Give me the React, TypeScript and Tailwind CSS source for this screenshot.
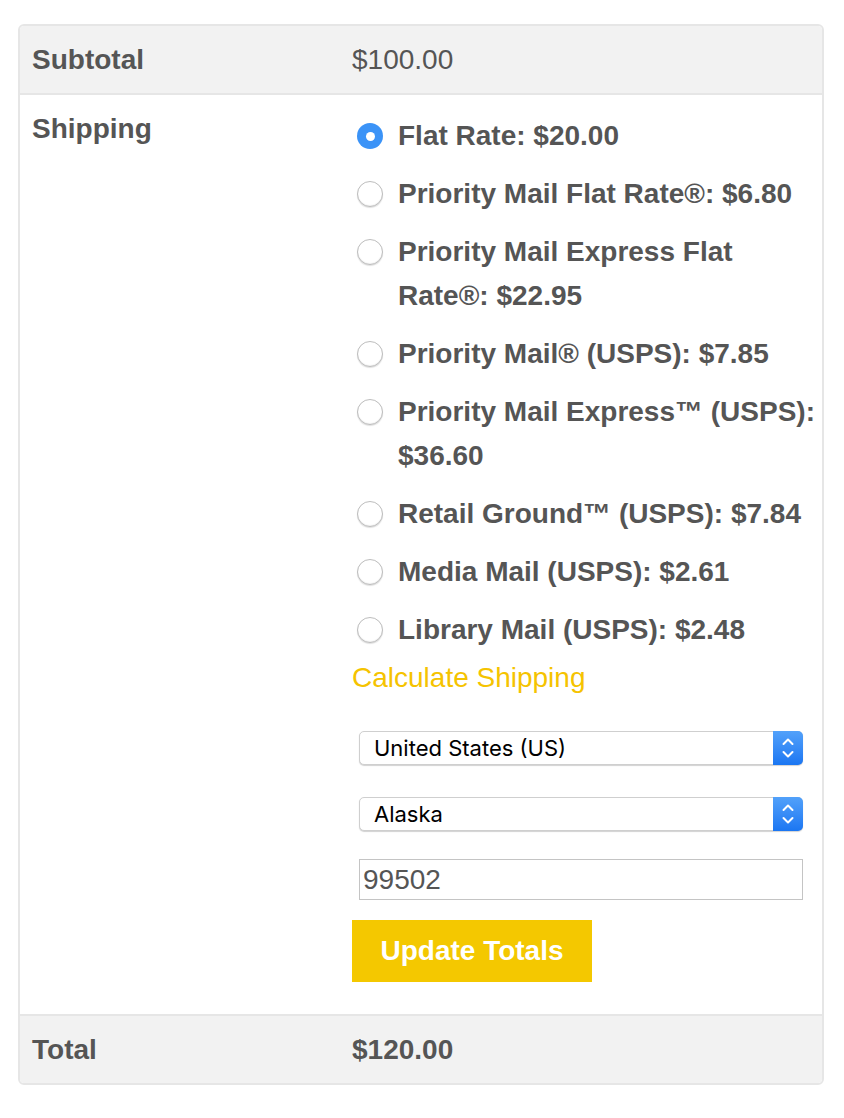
import React, { useState } from "react";

const rates = [
  { id: "flat", label: "Flat Rate: $20.00" },
  { id: "pmfr", label: "Priority Mail Flat Rate®: $6.80" },
  { id: "pmefr", label: "Priority Mail Express Flat Rate®: $22.95" },
  { id: "pm", label: "Priority Mail® (USPS): $7.85" },
  { id: "pme", label: "Priority Mail Express™ (USPS): $36.60" },
  { id: "rg", label: "Retail Ground™ (USPS): $7.84" },
  { id: "mm", label: "Media Mail (USPS): $2.61" },
  { id: "lm", label: "Library Mail (USPS): $2.48" },
];

const Stepper: React.FC = () => (
  <div className="pointer-events-none absolute right-[-1px] top-[-1px] bottom-[-1px] w-[30px] rounded-r-[5px] bg-gradient-to-b from-[#52a1fa] to-[#1a76f2] flex items-center justify-center">
    <svg width="12" height="22" viewBox="0 0 12 22" fill="none">
      <path d="M1.5 7 6 2.5 10.5 7" stroke="white" strokeWidth="2" strokeLinecap="round" strokeLinejoin="round" />
      <path d="M1.5 15 6 19.5 10.5 15" stroke="white" strokeWidth="2" strokeLinecap="round" strokeLinejoin="round" />
    </svg>
  </div>
);

const FakeSelect: React.FC<{ value: string; options: string[] }> = ({ value, options }) => (
  <div className="relative ml-[7px] mr-[19px] h-[34px] rounded-[5px] border border-[#cfcfcf] bg-white shadow-[0_1px_1px_rgba(0,0,0,0.18)]">
    <select
      defaultValue={value}
      className="h-full w-full appearance-none bg-transparent pl-[14px] pr-8 text-[22px] text-black outline-none"
      style={{ fontFamily: "Inter, 'Liberation Sans', sans-serif" }}
    >
      {options.map((o) => (
        <option key={o}>{o}</option>
      ))}
    </select>
    <Stepper />
  </div>
);

export default function App() {
  const [rate, setRate] = useState("flat");

  return (
    <div
      className="bg-white min-h-screen pt-[24px] px-[18px] text-[#555555]"
      style={{ fontFamily: "'Liberation Sans', Arial, sans-serif" }}
    >
      <div className="w-[806px] rounded-[6px] border-2 border-[#e6e6e6] overflow-hidden">
        <div className="grid grid-cols-[320px_1fr] bg-[#f2f2f2] border-b-2 border-[#e6e6e6]">
          <div className="px-3 py-3 text-[28px] leading-[43px] font-bold">Subtotal</div>
          <div className="px-3 py-3 text-[28px] leading-[43px]">$100.00</div>
        </div>

        <div className="grid grid-cols-[320px_1fr] border-b-2 border-[#e6e6e6]">
          <div className="px-3 py-3 text-[28px] leading-[44px] font-bold">Shipping</div>
          <div className="pl-3 pt-3 pb-[32px]">
            <ul>
              {rates.map((r) => (
                <li key={r.id} className="py-[7px]">
                  <label className="flex items-start cursor-pointer">
                    <input
                      type="radio"
                      name="rate"
                      checked={rate === r.id}
                      onChange={() => setRate(r.id)}
                      className="sr-only"
                    />
                    {rate === r.id ? (
                      <span className="mt-[9px] ml-[5px] mr-[15px] flex h-[26px] w-[26px] shrink-0 items-center justify-center rounded-full bg-[#3b93f7]">
                        <span className="h-[9px] w-[9px] rounded-full bg-white" />
                      </span>
                    ) : (
                      <span className="mt-[9px] ml-[5px] mr-[15px] h-[26px] w-[26px] shrink-0 rounded-full border border-[#bdbdbd] bg-white shadow-[inset_0_-1px_1px_rgba(0,0,0,0.06),0_1px_1px_rgba(0,0,0,0.12)]" />
                    )}
                    <span className="text-[28px] leading-[44px] font-bold">{r.label}</span>
                  </label>
                </li>
              ))}
            </ul>

            <a href="#" className="block text-[28px] leading-[38px] text-[#f5c300]">
              Calculate Shipping
            </a>

            <div className="mt-[34px]">
              <FakeSelect value="United States (US)" options={["United States (US)", "Canada (CA)"]} />
            </div>
            <div className="mt-[32px]">
              <FakeSelect value="Alaska" options={["Alabama", "Alaska", "Arizona"]} />
            </div>
            <div className="mt-[28px] ml-[7px] mr-[19px]">
              <input
                type="text"
                defaultValue="99502"
                className="h-[41px] w-full border border-[#c4c4c4] bg-white px-[3px] text-[28px] text-[#555555] outline-none"
              />
            </div>
            <button className="mt-[20px] h-[62px] w-[240px] bg-[#f4c800] text-[28px] font-bold text-white">
              Update Totals
            </button>
          </div>
        </div>

        <div className="grid grid-cols-[320px_1fr] bg-[#f2f2f2]">
          <div className="px-3 py-3 text-[28px] leading-[43px] font-bold">Total</div>
          <div className="px-3 py-3 text-[28px] leading-[43px] font-bold">$120.00</div>
        </div>
      </div>
    </div>
  );
}
